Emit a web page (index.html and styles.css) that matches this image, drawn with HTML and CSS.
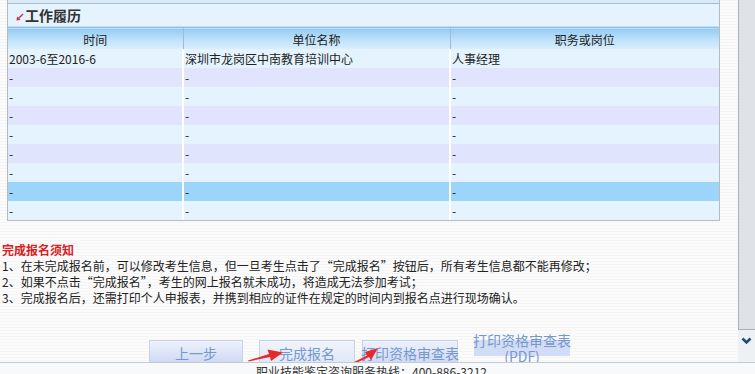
FILE: index.html
```html
<!DOCTYPE html>
<html lang="zh-CN">
<head>
    <meta charset="UTF-8">
    <meta name="viewport" content="width=device-width, initial-scale=1.0">
    <title>网上报名 - 工作履历</title>
    <link rel="stylesheet" href="styles.css">
</head>
<body>
  <div class="page">
    <div class="main">
      <div class="panel">
        <div class="panel-cap"></div>
        <div class="panel-title">
          <svg class="title-icon" width="8" height="8" viewBox="0 0 8 8"><path d="M7 1 L2.5 5.5" stroke="#c8324f" stroke-width="1.4"/><path d="M0.5 7.5 L1 3.5 L4.5 7 Z" fill="#c8324f"/></svg>
          工作履历
        </div>
        <table class="resume">
          <colgroup>
            <col class="col-time">
            <col class="col-unit">
            <col class="col-post">
          </colgroup>
          <thead>
            <tr><th>时间</th><th>单位名称</th><th>职务或岗位</th></tr>
          </thead>
          <tbody>
            <tr><td>2003-6至2016-6</td><td>深圳市龙岗区中南教育培训中心</td><td>人事经理</td></tr>
            <tr class="alt"><td>-</td><td>-</td><td>-</td></tr>
            <tr><td>-</td><td>-</td><td>-</td></tr>
            <tr class="alt"><td>-</td><td>-</td><td>-</td></tr>
            <tr><td>-</td><td>-</td><td>-</td></tr>
            <tr class="alt"><td>-</td><td>-</td><td>-</td></tr>
            <tr><td>-</td><td>-</td><td>-</td></tr>
            <tr class="selected"><td>-</td><td>-</td><td>-</td></tr>
            <tr><td>-</td><td>-</td><td>-</td></tr>
          </tbody>
        </table>
      </div>

      <div class="notice">
        <h4>完成报名须知</h4>
        <p>1、在未完成报名前，可以修改考生信息，但一旦考生点击了“完成报名”按钮后，所有考生信息都不能再修改；</p>
        <p>2、如果不点击“完成报名”，考生的网上报名就未成功，将造成无法参加考试；</p>
        <p>3、完成报名后，还需打印个人申报表，并携到相应的证件在规定的时间内到报名点进行现场确认。</p>
      </div>

      <div class="actions">
        <span class="btn">上一步</span>
        <span class="btn btn-light">完成报名</span>
        <span class="btn btn-print">打印资格审查表</span>
        <span class="btn btn-pdf">打印资格审查表<br>(PDF)</span>
        <svg class="mark mark-finish" width="36" height="14" viewBox="0 0 36 14"><polygon points="0,12.5 21,6 19.5,1.5 35,4.5 23,13 22,9 0.5,13.5" fill="#e42a2a"/></svg>
        <svg class="mark mark-print" width="26" height="17" viewBox="0 0 26 17"><polygon points="0,15 13,8.5 11,5 24,1 17,13 15,10 1,16.5" fill="#e42a2a"/></svg>
      </div>
    </div>

    <div class="scrollbar">
      <div class="thumb"></div>
      <div class="arrow">
        <svg width="11" height="8" viewBox="0 0 11 8"><polyline points="1.5,1.5 5.5,5.5 9.5,1.5" fill="none" stroke="#1f4d78" stroke-width="2.6"/></svg>
      </div>
    </div>
  </div>

  <div class="footer">职业技能鉴定咨询服务热线：400-886-3212</div>
</body>
</html>
```

FILE: styles.css
```css
body {
  margin: 0;
  height: 374px;
  overflow: hidden;
  font-family: "Noto Sans CJK SC", "Noto Sans", sans-serif;
  font-size: 12px;
  color: #222;
  background: repeating-linear-gradient(#f5f5f5 0 1px, #fbfbfb 1px 3px);
}
.page {
  display: flex;
}
.main {
  width: 738px;
}
.panel {
  margin-left: 7px;
  width: 713px;
  box-sizing: border-box;
  border: 1px solid #b3bcc5;
  border-top: none;
  background-color: #e4f3fd;
}
.panel-cap {
  height: 3px;
  background-color: #d9ebf8;
  border-bottom: 1px solid #a9bccd;
}
.panel-title {
  height: 22px;
  display: flex;
  align-items: center;
  padding-left: 8px;
  font-size: 14px;
  font-weight: bold;
  color: #333;
  border-bottom: 1px solid #c4def1;
}
.title-icon {
  margin: 3px 1px 0 0;
}
.resume {
  width: 711px;
  border-collapse: collapse;
  table-layout: fixed;
}
.col-time {
  width: 175px;
}
.col-unit {
  width: 267px;
}
.resume th {
  height: 21px;
  padding: 2px 0 0;
  box-sizing: border-box;
  font-weight: normal;
  font-size: 12px;
  line-height: 19px;
  color: #222;
  background: linear-gradient(#93cbf3, #bfe2fa 55%, #dbeffd);
  border-top: 1px solid #8fbfe2;
  border-right: 1px solid #9fbbd2;
}
.resume th:last-child,
.resume td:last-child {
  border-right: none;
}
.resume td {
  height: 19px;
  padding: 0 0 0 1px;
  line-height: 19px;
  white-space: nowrap;
  overflow: hidden;
  background-color: #e4f3fe;
  border-right: 2px solid #fff;
}
.resume tr.alt td {
  background-color: #e0e4fc;
}
.resume tr.selected td {
  background-color: #9dd4f9;
}
.notice {
  margin-top: 21px;
  padding-left: 2px;
}
.notice h4 {
  margin: 0;
  font-size: 12px;
  line-height: 16px;
  color: #d9211d;
}
.notice p {
  margin: 0;
  line-height: 16px;
}
.actions {
  position: relative;
  display: flex;
  align-items: flex-start;
  margin-top: 34px;
  padding-left: 149px;
}
.btn {
  display: flex;
  align-items: center;
  justify-content: center;
  width: 94px;
  height: 26px;
  box-sizing: border-box;
  border: 1px solid #c9d1e6;
  background: linear-gradient(#eef2fc, #cbd6f4);
  color: #7598cf;
  font-size: 14px;
  white-space: nowrap;
}
.btn + .btn {
  margin-left: 16px;
}
.btn-light {
  width: 96px;
  background: linear-gradient(#f1f4fb, #dde5f6);
}
.btn.btn-print {
  width: 96px;
  margin-left: 7px;
}
.btn.btn-pdf {
  width: 96px;
  height: 16px;
  border: none;
  background: #d3dcf5;
  line-height: 16px;
  text-align: center;
  margin-left: 16px;
}
.mark {
  position: absolute;
}
.mark-finish {
  left: 248px;
  top: 8px;
}
.mark-print {
  left: 354px;
  top: 7px;
}
.scrollbar {
  width: 17px;
}
.thumb {
  height: 330px;
  box-sizing: border-box;
  border-left: 1px solid #a9b1b8;
  border-bottom: 1px solid #a9b1b8;
  background-color: #dfe3e7;
}
.arrow {
  display: flex;
  justify-content: center;
  padding-top: 7px;
  height: 26px;
  background-color: #eef1f4;
}
.footer {
  position: fixed;
  left: 0;
  right: 0;
  bottom: 0;
  height: 11px;
  overflow: hidden;
  border-top: 1px solid #c3cbd3;
  background-color: #f8f9fa;
  text-align: center;
  padding-right: 12px;
  line-height: 17px;
  font-size: 12px;
  color: #333;
}
```
